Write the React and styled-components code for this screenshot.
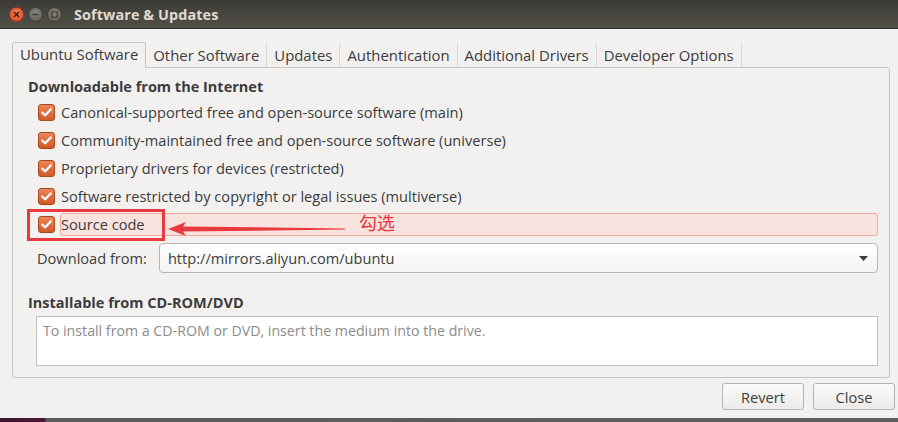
import React from "react";
import styled, { createGlobalStyle } from "styled-components";

const Global = createGlobalStyle`
  html, body { margin: 0; padding: 0; background: #f2f1f0; }
  body { font-family: "Open Sans", "Noto Sans", sans-serif; }
  #root { width: 898px; height: 422px; overflow: hidden; }
`;

const Window = styled.div`
  width: 898px;
  height: 422px;
  display: flex;
  flex-direction: column;
  background: #f2f1f0;
  overflow: hidden;
`;

const TitleBar = styled.div`
  height: 29px;
  flex: none;
  display: flex;
  align-items: center;
  padding-left: 9px;
  background: linear-gradient(#3b3a36, #4a4842 60%, #514e47);
  border-bottom: 1px solid #2f2e2b;
  box-sizing: border-box;
`;

const WinBtn = styled.div`
  width: 15px;
  height: 15px;
  border-radius: 50%;
  margin-right: 4px;
  display: flex;
  align-items: center;
  justify-content: center;
  box-sizing: border-box;
  background: ${(p) =>
    p.$close
      ? "radial-gradient(circle at 50% 35%, #f47a52, #dd4a20)"
      : "radial-gradient(circle at 50% 35%, #85827b, #5f5c56)"};
  border: 1px solid ${(p) => (p.$close ? "#a8371a" : "#3e3c38")};
`;

const Title = styled.div`
  margin-left: 8px;
  color: #dfdbd2;
  font-family: "Open Sans", sans-serif;
  font-weight: 700;
  font-size: 14.4px;
  letter-spacing: 0.1px;
`;

const Body = styled.div`
  flex: 1;
  display: flex;
  flex-direction: column;
  padding: 12px 8px 0 12px;
  position: relative;
`;

const Tabs = styled.div`
  display: flex;
  align-items: flex-end;
  height: 26px;
  position: relative;
  z-index: 1;
`;

const Tab = styled.div`
  height: ${(p) => (p.$active ? "26px" : "24px")};
  box-sizing: border-box;
  padding: 0 7px;
  display: flex;
  align-items: center;
  font-size: 14.9px;
  color: #3c3c3c;
  white-space: nowrap;
  background: ${(p) => (p.$active ? "#f2f1f0" : "transparent")};
  border: ${(p) => (p.$active ? "1px solid #c8c5c0" : "none")};
  border-bottom: ${(p) => (p.$active ? "1px solid #f2f1f0" : "none")};
  border-right: 1px solid ${(p) => (p.$active ? "#c8c5c0" : "#dcd9d5")};
  border-radius: ${(p) => (p.$active ? "3px 3px 0 0" : "0")};
  margin-bottom: ${(p) => (p.$active ? "-1px" : "0")};
  padding-bottom: ${(p) => (p.$active ? "2px" : "1px")};
`;

const Panel = styled.div`
  height: 311px;
  box-sizing: border-box;
  border: 1px solid #c8c5c0;
  border-radius: 0 3px 3px 3px;
  padding: 8px 11px 0 15px;
  display: flex;
  flex-direction: column;
`;

const Heading = styled.div`
  font-weight: 700;
  font-size: 14.5px;
  color: #3c3c3c;
  height: 20px;
  display: flex;
  align-items: center;
`;

const CheckList = styled.div`
  display: flex;
  flex-direction: column;
  padding-left: 10px;
  margin-top: 2px;
`;

const CheckRow = styled.div`
  height: 28px;
  display: flex;
  align-items: center;
  gap: 6px;
  position: relative;
`;

const Box = styled.div`
  width: 17px;
  height: 17px;
  flex: none;
  box-sizing: border-box;
  border-radius: 3px;
  border: 1px solid #a9461e;
  background: linear-gradient(#ec8458, #d05a2a);
  display: flex;
  align-items: center;
  justify-content: center;
`;

const Label = styled.div`
  font-size: 14.6px;
  color: #3c3c3c;
  white-space: nowrap;
`;

const Highlight = styled.div`
  flex: 1;
  height: 23px;
  display: flex;
  align-items: center;
  box-sizing: border-box;
  border: 1px solid #f0aaa0;
  border-radius: 3px;
  background: #f8e3df;
`;

const SourceRow = styled(CheckRow)`
  gap: 5px;
`;

const RedBox = styled.div`
  position: absolute;
  left: -11px;
  top: -1px;
  width: 138px;
  height: 32px;
  box-sizing: border-box;
  border: 3px solid #e83a3f;
`;

const Arrow = styled.svg`
  position: absolute;
  left: 130px;
  top: 11px;
`;

const Note = styled.div`
  position: absolute;
  left: 321px;
  top: -1px;
  color: #e8343c;
  font-size: 18px;
  font-family: "Noto Sans CJK SC", sans-serif;
`;

const FromRow = styled.div`
  display: flex;
  align-items: center;
  margin-top: 5px;
  padding-left: 9px;
  gap: 12px;
`;

const Combo = styled.div`
  flex: 1;
  height: 30px;
  box-sizing: border-box;
  border: 1px solid #b9b6b1;
  border-radius: 4px;
  background: linear-gradient(#ffffff, #f4f3f2);
  display: flex;
  align-items: center;
  justify-content: space-between;
  padding: 0 9px 0 8px;
  font-size: 14.6px;
  color: #3c3c3c;
`;

const Heading2 = styled(Heading)`
  margin-top: 19px;
`;

const TextArea = styled.div`
  margin: 4px 0 0 8px;
  height: 50px;
  box-sizing: border-box;
  border: 1px solid #c3c0bb;
  background: #ffffff;
  padding: 4px 6px;
  font-size: 14.2px;
  color: #8c8c8c;
`;

const Footer = styled.div`
  display: flex;
  justify-content: flex-end;
  gap: 9px;
  margin-top: 5px;
  margin-right: -5px;
`;

const Button = styled.div`
  width: 82px;
  height: 27px;
  box-sizing: border-box;
  border: 1px solid #b6b3ae;
  border-radius: 3px;
  background: linear-gradient(#fbfbfa, #ecebe9);
  display: flex;
  align-items: center;
  justify-content: center;
  font-size: 14.6px;
  color: #3c3c3c;
`;

const Dock = styled.div`
  position: absolute;
  left: 0;
  right: 0;
  bottom: 0;
  height: 4px;
  background: linear-gradient(90deg, #3e1530 0, #4a1a38 45px, #5a5a5a 46px, #5f5f5f 100%);
`;

const Check = () => (
  <svg width="11" height="9" viewBox="0 0 11 9">
    <path d="M1.3 4.6 L4.2 7.3 L9.7 1.4" stroke="#fff" strokeWidth="2.2" fill="none" strokeLinecap="round" strokeLinejoin="round" />
  </svg>
);

const items = [
  "Canonical-supported free and open-source software (main)",
  "Community-maintained free and open-source software (universe)",
  "Proprietary drivers for devices (restricted)",
  "Software restricted by copyright or legal issues (multiverse)",
];

const tabs = [
  "Ubuntu Software",
  "Other Software",
  "Updates",
  "Authentication",
  "Additional Drivers",
  "Developer Options",
];

export default function App() {
  return (
    <Window>
      <Global />
      <TitleBar>
        <WinBtn $close>
          <svg width="7" height="7" viewBox="0 0 7 7">
            <path d="M1 1 L6 6 M6 1 L1 6" stroke="#3a1a10" strokeWidth="1.3" />
          </svg>
        </WinBtn>
        <WinBtn>
          <svg width="7" height="7" viewBox="0 0 7 7">
            <path d="M0.5 3.5 H6.5" stroke="#3a3835" strokeWidth="1.3" />
          </svg>
        </WinBtn>
        <WinBtn>
          <svg width="7" height="7" viewBox="0 0 7 7">
            <rect x="0.8" y="0.8" width="5.4" height="5.4" stroke="#3a3835" strokeWidth="1.1" fill="none" />
          </svg>
        </WinBtn>
        <Title>Software &amp; Updates</Title>
      </TitleBar>
      <Body>
        <Tabs>
          {tabs.map((t, i) => (
            <Tab key={t} $active={i === 0}>
              {t}
            </Tab>
          ))}
        </Tabs>
        <Panel>
          <Heading>Downloadable from the Internet</Heading>
          <CheckList>
            {items.map((t) => (
              <CheckRow key={t}>
                <Box>
                  <Check />
                </Box>
                <Label>{t}</Label>
              </CheckRow>
            ))}
            <SourceRow>
              <Box>
                <Check />
              </Box>
              <Highlight>
                <Label>Source code</Label>
              </Highlight>
              <RedBox />
              <Arrow width="180" height="16" viewBox="0 0 180 16">
                <path d="M0 8 L18 1 L15 5.4 L177 7.4 L177 8.6 L15 10.6 L18 15 Z" fill="#e83a3f" />
              </Arrow>
              <Note>勾选</Note>
            </SourceRow>
          </CheckList>
          <FromRow>
            <Label>Download from:</Label>
            <Combo>
              <span>http://mirrors.aliyun.com/ubuntu</span>
              <svg width="9" height="5" viewBox="0 0 9 5">
                <path d="M0 0 H9 L4.5 5 Z" fill="#3c3c3c" />
              </svg>
            </Combo>
          </FromRow>
          <Heading2>Installable from CD-ROM/DVD</Heading2>
          <TextArea>To install from a CD-ROM or DVD, insert the medium into the drive.</TextArea>
        </Panel>
        <Footer>
          <Button>Revert</Button>
          <Button>Close</Button>
        </Footer>
        <Dock />
      </Body>
    </Window>
  );
}
